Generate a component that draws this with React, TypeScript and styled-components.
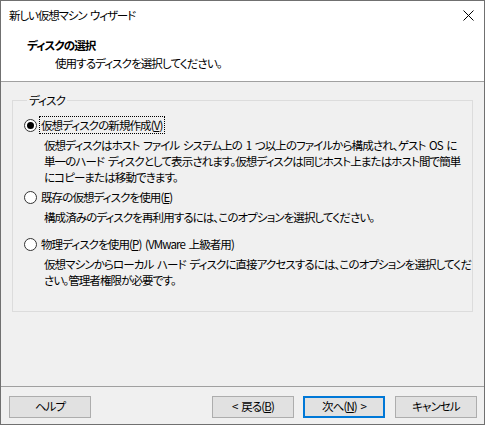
import React from 'react'
import styled, { createGlobalStyle, css } from 'styled-components'

const GlobalStyle = createGlobalStyle`
  html, body {
    margin: 0;
    padding: 0;
    background: #ffffff;
  }
  body {
    font-family: "Noto Sans CJK JP", "Noto Sans", sans-serif;
    font-size: 11.5px;
    letter-spacing: -0.9px;
    word-spacing: 2px;
    color: #000000;
    font-feature-settings: "palt";
  }
`

const Window = styled.div`
  box-sizing: border-box;
  width: 485px;
  height: 425px;
  border: 1px solid #707070;
  display: flex;
  flex-direction: column;
  background: #f0f0f0;
`

const TitleBar = styled.div`
  height: 29px;
  background: #ffffff;
  display: flex;
  align-items: center;
  justify-content: space-between;
  padding: 0 0 0 8px;
`

const Title = styled.span`
  line-height: 1;
  padding-top: 1px;
  letter-spacing: -1.1px;
`

const CloseButton = styled.div`
  width: 30px;
  height: 29px;
  display: flex;
  align-items: center;
  justify-content: center;
  margin-right: 1px;
`

const Header = styled.div`
  height: 52px;
  background: #ffffff;
  border-bottom: 1px solid #a0a0a0;
  padding: 6px 0 0 26px;
  box-sizing: border-box;
`

const HeaderTitle = styled.div`
  font-weight: bold;
  line-height: 18px;
`

const HeaderSub = styled.div`
  padding-left: 28px;
  line-height: 18px;
`

const Body = styled.div`
  flex: 1;
  padding: 11px 11px 0 11px;
`

const GroupBox = styled.fieldset`
  margin: 0;
  height: 219px;
  box-sizing: border-box;
  border: 1px solid #dcdcdc;
  padding: 6px 0 0 11px;
`

const Legend = styled.legend`
  padding: 0 2px;
  margin-left: 3px;
  line-height: 14px;
`

const Option = styled.div<{ $gap: number }>`
  margin-top: ${({ $gap }) => $gap}px;
`

const OptionLabel = styled.label`
  display: flex;
  align-items: center;
  gap: 3px;
  height: 18px;
`

const Radio = styled.span<{ $checked: boolean }>`
  box-sizing: border-box;
  width: 13px;
  height: 13px;
  border-radius: 50%;
  border: 1px solid #333333;
  background: #ffffff;
  display: flex;
  align-items: center;
  justify-content: center;
  ${({ $checked }) =>
    $checked &&
    css`
      &::after {
        content: '';
        width: 7px;
        height: 7px;
        border-radius: 50%;
        background: #000000;
      }
    `}
`

const LabelText = styled.span<{ $focused?: boolean }>`
  padding: 0 2px 0 1px;
  line-height: 16px;
  outline: ${({ $focused }) => ($focused ? '1px dotted #000000' : 'none')};
`

const Desc = styled.p`
  margin: 3px 0 0 20px;
  line-height: 16px;
  white-space: nowrap;
`

const Footer = styled.div`
  height: 38px;
  border-top: 1px solid #a0a0a0;
  display: flex;
  align-items: flex-start;
  padding: 9px 7px 0 8px;
  box-sizing: border-box;
`

const Spacer = styled.div`
  flex: 1;
`

const Button = styled.button<{ $default?: boolean; $gap?: number }>`
  box-sizing: border-box;
  width: 82px;
  height: 22px;
  margin-left: ${({ $gap }) => $gap ?? 0}px;
  background: #e1e1e1;
  border: 1px solid #adadad;
  font-family: inherit;
  font-size: inherit;
  letter-spacing: inherit;
  word-spacing: inherit;
  font-feature-settings: "palt";
  color: #000000;
  padding: 0;
  line-height: 1;
  ${({ $default }) =>
    $default &&
    css`
      border: 2px solid #0078d7;
    `}
`

export default function App() {
  return (
    <>
      <GlobalStyle />
      <Window>
        <TitleBar>
          <Title>新しい仮想マシン ウィザード</Title>
          <CloseButton>
            <svg width="11" height="11" viewBox="0 0 11 11">
              <path d="M0.5 0.5 L10.5 10.5 M10.5 0.5 L0.5 10.5" stroke="#000" strokeWidth="1" />
            </svg>
          </CloseButton>
        </TitleBar>
        <Header>
          <HeaderTitle>ディスクの選択</HeaderTitle>
          <HeaderSub>使用するディスクを選択してください。</HeaderSub>
        </Header>
        <Body>
          <GroupBox>
            <Legend>ディスク</Legend>
            <Option $gap={3}>
              <OptionLabel>
                <Radio $checked />
                <LabelText $focused>
                  仮想ディスクの新規作成(<u>V</u>)
                </LabelText>
              </OptionLabel>
              <Desc>
                仮想ディスクはホスト ファイル システム上の 1 つ以上のファイルから構成され、ゲスト OS に
                <br />
                単一のハード ディスクとして表示されます。仮想ディスクは同じホスト上またはホスト間で簡単
                <br />
                にコピーまたは移動できます。
              </Desc>
            </Option>
            <Option $gap={3}>
              <OptionLabel>
                <Radio $checked={false} />
                <LabelText>
                  既存の仮想ディスクを使用(<u>E</u>)
                </LabelText>
              </OptionLabel>
              <Desc>構成済みのディスクを再利用するには、このオプションを選択してください。</Desc>
            </Option>
            <Option $gap={10}>
              <OptionLabel>
                <Radio $checked={false} />
                <LabelText>
                  物理ディスクを使用(<u>P</u>) (VMware 上級者用)
                </LabelText>
              </OptionLabel>
              <Desc>
                仮想マシンからローカル ハード ディスクに直接アクセスするには、このオプションを選択してくだ
                <br />
                さい。管理者権限が必要です。
              </Desc>
            </Option>
          </GroupBox>
        </Body>
        <Footer>
          <Button>ヘルプ</Button>
          <Spacer />
          <Button>
            &lt; 戻る(<u>B</u>)
          </Button>
          <Button $default $gap={9}>
            次へ(<u>N</u>) &gt;
          </Button>
          <Button $gap={10}>キャンセル</Button>
        </Footer>
      </Window>
    </>
  )
}
